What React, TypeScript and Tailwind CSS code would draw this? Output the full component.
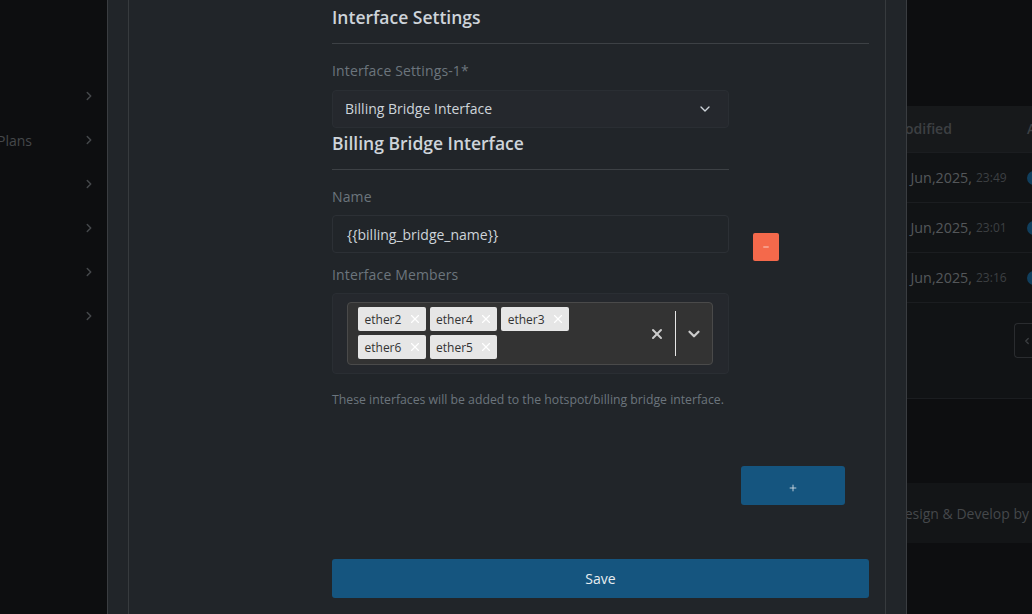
import { ChevronDown, ChevronLeft, ChevronRight, Plus, Minus, X } from "lucide-react";

const rows = [
	{ date: "21 Jun,2025,", time: "23:49" },
	{ date: "29 Jun,2025,", time: "23:01" },
	{ date: "24 Jun,2025,", time: "23:16" },
];

const tagRows = [
	["ether2", "ether4", "ether3"],
	["ether6", "ether5"],
];

const Tag = ({ label }: { label: string }) => (
	<div className="flex h-6 items-center rounded-[2px] bg-[#e6e6e6] pl-[6.5px] pr-[4px] text-xs text-[#333333]">
		<span className="w-[43.1px] pt-[1px]">{label}</span>
		<X size={14} strokeWidth={2} className="text-white" />
	</div>
);

const Sidebar = () => (
	<div className="flex w-[107px] shrink-0 flex-col items-end pr-[11px] pt-[74px]">
		{["", "Plans", "", "", "", ""].map((label, i) => (
			<div key={i} className="relative flex h-11 w-full items-center justify-end">
				{label && (
					<span className="absolute left-[-3px] top-[13px] text-sm text-[#45484b]">
						{label}
					</span>
				)}
				<ChevronRight size={14} strokeWidth={2.5} className="text-[#45484b]" />
			</div>
		))}
	</div>
);

const RightPanel = () => (
	<div className="flex w-[125px] shrink-0 flex-col pt-[106px]">
		<div className="flex h-[47px] items-center overflow-hidden border-b border-[#1b1d20] bg-[#17191b]">
			<div className="flex w-full items-center justify-end">
				<span className="whitespace-nowrap text-sm font-semibold text-[#3d4043]">Modified</span>
				<span className="ml-[75px] mr-[-38px] text-sm font-semibold text-[#3d4043]">Action</span>
			</div>
		</div>
		{rows.map(row => (
			<div key={row.time} className="flex h-[50px] items-center justify-end overflow-hidden border-b border-[#1b1d20] bg-[#111315]">
				<span className="whitespace-nowrap text-[14.3px] text-[#54575a]">{row.date}</span>
				<span className="ml-[4px] w-[36px] shrink-0 whitespace-nowrap text-xs text-[#3d4043]">{row.time}</span>
				<div className="ml-[15px] mr-[-9px] size-[14px] shrink-0 rounded-full bg-[#103f5e]" />
			</div>
		))}
		<div className="flex h-[96px] justify-end border-b border-[#1b1d20] bg-[#111315] pt-[20px]">
			<div className="flex h-[35px] w-[18px] items-center justify-end rounded-l border border-r-0 border-[#2a2c2f] text-[#3d4043]">
				<ChevronLeft size={10} strokeWidth={3} />
			</div>
		</div>
		<div className="mt-[84px] flex h-[60px] items-center overflow-hidden bg-[#131517] pt-[1px]">
			<div className="flex w-full justify-end">
				<span className="mr-[3px] whitespace-nowrap text-sm text-[#45484b]">Design &amp; Develop by</span>
			</div>
		</div>
	</div>
);

export default function App() {
	return (
		<div
			className="flex h-[614px] w-[1032px] overflow-hidden bg-[#0d0e10]"
			style={{ fontFamily: '"Open Sans", sans-serif' }}
		>
			<Sidebar />
			<div className="h-full w-[800px] shrink-0 border-x border-[#3a3d41] bg-[#212529] px-5">
				<div className="h-full border-x border-[#373b3e] pl-[203px] pr-4">
					<div className="flex h-[34px] items-center pt-[2px] text-[17.5px] font-semibold leading-none text-[#ced4da]">
						Interface Settings
					</div>
					<div className="mt-[9px] h-px bg-[#3d4145]" />
					<div className="mt-[17px] text-sm font-medium leading-[20px] tracking-[0.14px] text-[#6c757d]">Interface Settings-1*</div>
					<div className="flex items-start">
						<div className="w-[397px]">
							<div className="mt-[9px] flex h-[38px] items-center justify-between rounded border border-[#2a2e33] bg-[#25282d] pl-3 pr-[15px] text-sm text-[#ced4da]">
								<span>Billing Bridge Interface</span>
								<ChevronDown size={16} className="text-[#ced4da]" />
							</div>
							<div className="mt-[2px] text-[17.5px] font-semibold leading-[26px] text-[#ced4da]">
								Billing Bridge Interface
							</div>
							<div className="mt-[13px] h-px bg-[#3d4145]" />
							<div className="mt-[17px] text-sm font-medium leading-[20px] tracking-[0.14px] text-[#6c757d]">Name</div>
							<div className="mt-2 flex h-[38px] items-center rounded border border-[#2c3035] pl-[14px] pt-[2px] text-sm text-[#ced4da]">
								{"{{billing_bridge_name}}"}
							</div>
							<div className="mt-[12px] text-sm font-medium leading-[20px] tracking-[0.14px] text-[#6c757d]">Interface Members</div>
							<div className="mt-2 h-[81px] rounded border border-[#2a2e33] bg-[#25282d] py-2 pl-[14px] pr-[15px]">
								<div className="flex h-[63px] items-center justify-between rounded border border-[#4a4a4a] bg-[#333333] pl-[10px]">
									<div className="flex flex-col gap-1 pb-[1px]">
										{tagRows.map((tags, i) => (
											<div key={i} className="flex gap-1">
												{tags.map(tag => (
													<Tag key={tag} label={tag} />
												))}
											</div>
										))}
									</div>
									<div className="flex items-center">
										<X size={16} strokeWidth={3} className="text-[#cccccc]" />
										<div className="ml-[10px] h-[45px] w-px bg-[#e6e6e6]" />
										<ChevronDown size={18} strokeWidth={3} className="mx-[9px] text-[#cccccc]" />
									</div>
								</div>
							</div>
							<div className="mt-[17px] text-[12.25px] leading-[18px] text-[#6c757d]">
								These interfaces will be added to the hotspot/billing bridge interface.
							</div>
						</div>
						<div className="ml-6 mt-[152px] flex h-7 w-[26px] items-center justify-center rounded-[2px] bg-[#f4694b]">
							<Minus size={8} className="text-white" />
						</div>
					</div>
					<div className="mt-[57px] flex justify-end pr-6">
						<div className="flex h-[39px] w-[104px] items-center justify-center rounded-[3px] bg-[#15557f]">
							<Plus size={10} strokeWidth={2} className="mt-[4px] text-[#dce3e8]" />
						</div>
					</div>
					<div className="mt-[54px] flex h-[39px] items-center justify-center rounded-[3px] bg-[#15557f] text-sm font-medium text-[#e8edf0]">
						Save
					</div>
				</div>
			</div>
			<RightPanel />
		</div>
	);
}
